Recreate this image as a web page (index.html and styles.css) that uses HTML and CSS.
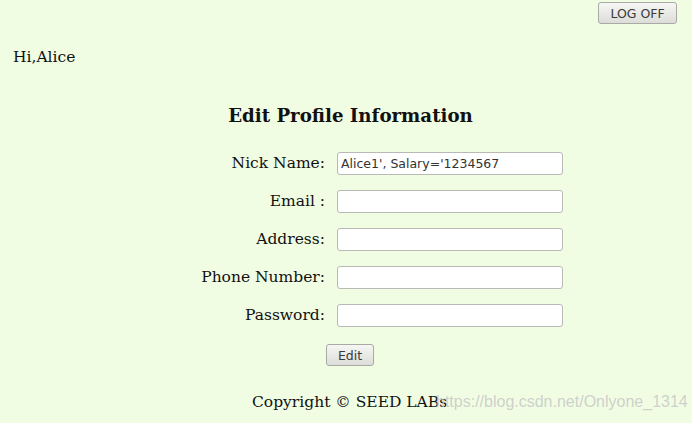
FILE: index.html
```html
<!DOCTYPE html>
<html>
<head>
<meta charset="utf-8">
<link rel="stylesheet" href="styles.css">
</head>
<body>
<div class="topbar"><button class="btn logoff">LOG OFF</button></div>
<div class="greet">Hi,Alice</div>
<h3 class="title">Edit Profile Information</h3>
<form class="form">
  <label class="lbl">Nick Name:</label><input class="field" type="text" value="Alice1', Salary='1234567">
  <label class="lbl">Email :</label><input class="field" type="text">
  <label class="lbl">Address:</label><input class="field" type="text">
  <label class="lbl">Phone Number:</label><input class="field" type="text">
  <label class="lbl">Password:</label><input class="field" type="password">
</form>
<div class="actions"><button class="btn edit">Edit</button></div>
<div class="footer">Copyright © SEED LABs<span class="wm">https://blog.csdn.net/Onlyone_1314</span></div>
</body>
</html>
```
FILE: styles.css
```css
html, body { margin: 0; padding: 0; }
body {
  background: #f1fde3;
  font-family: "DejaVu Serif", serif;
  font-size: 15.5px;
  color: #111;
  width: 692px;
  height: 423px;
  overflow: hidden;
}
.topbar {
  display: flex;
  justify-content: flex-end;
  padding: 2px 15px 0 0;
}
.btn {
  font-family: "DejaVu Sans", sans-serif;
  font-size: 12.5px;
  color: #3a3a3a;
  background: linear-gradient(#f6f6f4, #dcdcd8);
  border: 1px solid #a9a9a6;
  border-radius: 3px;
  padding: 0;
  height: 22px;
}
.logoff { width: 79px; }
.greet {
  margin: 23px 0 0 13px;
  line-height: 20px;
}
.title {
  font-size: 18.2px;
  font-weight: bold;
  text-align: center;
  margin: 37px 0 0 0;
  padding-left: 9px;
  line-height: 24px;
}
.form {
  display: grid;
  grid-template-columns: 325px 226px;
  column-gap: 12px;
  row-gap: 15px;
  margin-top: 24px;
  align-items: center;
}
.lbl {
  text-align: right;
  line-height: 23px;
}
.field {
  box-sizing: border-box;
  height: 23px;
  width: 226px;
  margin: 0;
  background: #fff;
  border: 1px solid #b9b9b6;
  border-radius: 3px;
  padding: 0 3px;
  font-family: "DejaVu Sans", sans-serif;
  font-size: 12.5px;
  color: #333;
}
.actions {
  display: flex;
  justify-content: flex-start;
  padding-left: 326px;
  margin-top: 17px;
}
.edit { width: 48px; }
.footer {
  position: relative;
  margin-top: 26px;
  padding-left: 252px;
  line-height: 20px;
}
.wm {
  position: absolute;
  left: 436px;
  top: 0;
  font-family: "Liberation Sans", sans-serif;
  font-size: 16px;
  color: rgba(200, 200, 200, 0.85);
}
```
